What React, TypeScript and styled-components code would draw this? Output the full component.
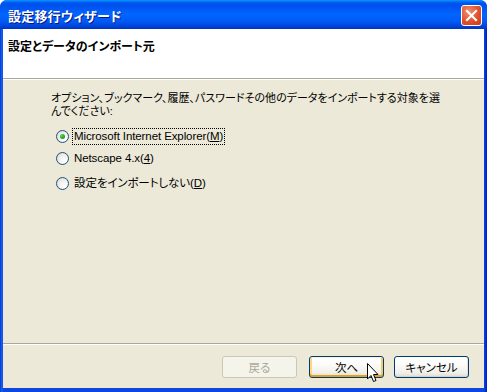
import React from 'react';
import styled, { createGlobalStyle } from 'styled-components';

const GlobalStyle = createGlobalStyle`
  html, body {
    margin: 0;
    padding: 0;
    background: #ffffff;
  }
  body {
    font-family: "Liberation Sans", "Noto Sans CJK JP", sans-serif;
    font-size: 12px;
  }
`;

const jp = `"Liberation Sans", "Noto Sans CJK JP", sans-serif`;

function App() {
  return (
    <>
      <GlobalStyle />
      <Window>
        <TitleBar>
          <TitleText>設定移行ウィザード</TitleText>
          <CloseButton aria-label="閉じる">
            <svg width="13" height="13" viewBox="0 0 13 13">
              <path
                d="M2 2 L11 11 M11 2 L2 11"
                stroke="#ffffff"
                strokeWidth="2.2"
                strokeLinecap="square"
              />
            </svg>
          </CloseButton>
        </TitleBar>
        <Client>
          <Header>
            <HeaderTitle>設定とデータのインポート元</HeaderTitle>
          </Header>
          <Separator />
          <Body>
            <Intro>
              オプション、ブックマーク、履歴、パスワードその他のデータをインポートする対象を選
              <br />
              んでください:
            </Intro>
            <RadioList>
              <RadioRow>
                <Radio checked />
                <RadioLabel focused>
                  Microsoft Internet Explorer(<u>M</u>)
                </RadioLabel>
              </RadioRow>
              <RadioRow>
                <Radio />
                <RadioLabel>
                  Netscape 4.x(<u>4</u>)
                </RadioLabel>
              </RadioRow>
              <RadioRow>
                <Radio />
                <RadioLabel>
                  設定をインポートしない(<u>D</u>)
                </RadioLabel>
              </RadioRow>
            </RadioList>
          </Body>
          <Separator />
          <ButtonBar>
            <Button disabled>戻る</Button>
            <Button hot>
              次へ
              <Cursor width="12" height="20" viewBox="0 0 12 20">
                <path
                  d="M0.5 0.5 L0.5 16 L4 12.5 L6.5 18.5 L9 17.5 L6.5 11.5 L11 11.5 Z"
                  fill="#ffffff"
                  stroke="#000000"
                  strokeWidth="1"
                  strokeLinejoin="miter"
                />
              </Cursor>
            </Button>
            <Button>キャンセル</Button>
          </ButtonBar>
        </Client>
      </Window>
    </>
  );
}

const Window = styled.div`
  width: 487px;
  height: 392px;
  box-sizing: border-box;
  display: flex;
  flex-direction: column;
  background: linear-gradient(to right, #0831d9 0px, #166aee 2px, #0a48e0 3px, #0a48e0 calc(100% - 3px), #0019cf 100%);
  border-radius: 7px 7px 0 0;
  overflow: hidden;
`;

const TitleBar = styled.div`
  height: 29px;
  flex: none;
  display: flex;
  align-items: center;
  justify-content: space-between;
  padding: 0 5px 0 8px;
  background: linear-gradient(
    to bottom,
    #0997ff 0px,
    #0053ee 3px,
    #0050ee 6px,
    #0066ff 14px,
    #0058f4 22px,
    #0046d8 26px,
    #0033c4 29px
  );
`;

const TitleText = styled.span`
  font-family: ${jp};
  font-feature-settings: 'palt';
  font-weight: 700;
  font-size: 13px;
  letter-spacing: 0.2px;
  color: #ffffff;
  text-shadow: 1px 1px 0 #0a1883;
  margin-top: 1px;
`;

const CloseButton = styled.div`
  width: 21px;
  height: 21px;
  box-sizing: border-box;
  display: flex;
  align-items: center;
  justify-content: center;
  border: 1px solid #ffffff;
  border-radius: 3px;
  background: radial-gradient(circle at 35% 30%, #f0906f 0%, #e2502c 55%, #c43a1a 100%);
  margin-top: 2px;
`;

const Client = styled.div`
  flex: 1;
  display: flex;
  flex-direction: column;
  margin: 0 3px 4px 3px;
  background: #ece9d8;
`;

const Header = styled.div`
  height: 49px;
  background: #ffffff;
  padding: 0 5px;
  display: flex;
  align-items: flex-start;
`;

const HeaderTitle = styled.div`
  font-family: ${jp};
  font-feature-settings: 'palt';
  font-weight: 700;
  font-size: 12px;
  color: #000000;
  margin-top: 8px;
`;

const Separator = styled.div`
  height: 1px;
  flex: none;
  background: #aca899;
  border-bottom: 1px solid #ffffff;
`;

const Body = styled.div`
  flex: 1;
  padding: 12px 0 0 48px;
  display: flex;
  flex-direction: column;
`;

const Intro = styled.div`
  font-family: ${jp};
  font-feature-settings: 'palt';
  font-size: 11px;
  line-height: 13px;
  color: #000000;
  white-space: nowrap;
`;

const RadioList = styled.div`
  display: flex;
  flex-direction: column;
  gap: 5px;
  margin-top: 10px;
  margin-left: 5px;
`;

const RadioRow = styled.div`
  display: flex;
  align-items: center;
  gap: 3px;
  height: 17px;
  &:nth-child(3) {
    margin-top: 3px;
  }
`;

const Radio = styled.span<{ checked?: boolean }>`
  width: 13px;
  height: 13px;
  box-sizing: border-box;
  border-radius: 50%;
  border: 1px solid #1c5180;
  background: radial-gradient(circle at 70% 70%, #ffffff 0%, #f3f2ee 45%, #d6d3c6 100%);
  display: flex;
  align-items: center;
  justify-content: center;
  flex: none;
  &::after {
    content: '';
    display: ${(p) => (p.checked ? 'block' : 'none')};
    width: 5px;
    height: 5px;
    border-radius: 50%;
    background: radial-gradient(circle at 35% 35%, #5ed45e 0%, #21a121 60%, #1a881a 100%);
  }
`;

const RadioLabel = styled.span<{ focused?: boolean }>`
  font-family: ${jp};
  font-feature-settings: 'palt';
  font-size: 11.5px;
  letter-spacing: -0.1px;
  line-height: 15px;
  color: #000000;
  padding: 0 1px;
  border: 1px dotted ${(p) => (p.focused ? '#000000' : 'transparent')};
  u {
    text-underline-offset: 1px;
  }
`;

const ButtonBar = styled.div`
  height: 43px;
  flex: none;
  display: flex;
  justify-content: flex-end;
  align-items: flex-start;
  gap: 10px;
  padding: 11px 15px 0 0;
  box-sizing: border-box;
  & > button:first-child {
    margin-right: 2px;
  }
`;

const Button = styled.button<{ hot?: boolean }>`
  position: relative;
  width: 75px;
  height: 22px;
  box-sizing: border-box;
  border: 1px solid ${(p) => (p.disabled ? '#c9c7ba' : '#003c74')};
  border-radius: 3px;
  padding: 0;
  font-family: ${jp};
  font-feature-settings: 'palt';
  font-size: 11.5px;
  color: ${(p) => (p.disabled ? '#aca899' : '#000000')};
  background: ${(p) =>
    p.disabled
      ? '#f5f4ea'
      : 'linear-gradient(to bottom, #ffffff 0%, #fbfbf9 40%, #f0efe9 80%, #dcdad1 100%)'};
  box-shadow: ${(p) =>
    p.hot
      ? 'inset 0 1px 0 #fff0cf, inset 0 -2px 0 #e5a01a, inset 2px 0 0 #fbd881, inset -2px 0 0 #f9c85f'
      : p.disabled
      ? 'none'
      : 'inset 0 -1px 0 #d6d0c5, inset -1px 0 0 #e3e0d6'};
`;

const Cursor = styled.svg`
  position: absolute;
  left: 57px;
  top: 6px;
`;

export default App;
